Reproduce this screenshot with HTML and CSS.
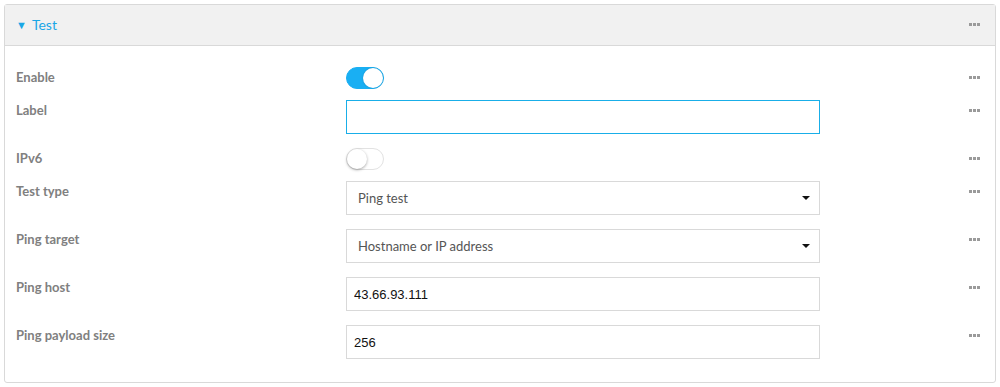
FILE: index.html
```html
<!DOCTYPE html>
<html lang="en">

<head>
    <meta charset="UTF-8">
    <title>Test</title>
    <link rel="stylesheet" href="styles.css">
</head>

<body>
    <div class="panel">
        <div class="panel-header">
            <span class="title"><span class="caret">&#9660;</span>Test</span>
            <span class="more"><i></i><i></i><i></i></span>
        </div>
        <div class="panel-body">
            <div class="row row-toggle">
                <label class="field-label">Enable</label>
                <div class="control"><span class="toggle on"><span class="knob"></span></span></div>
                <span class="more"><i></i><i></i><i></i></span>
            </div>
            <div class="row">
                <label class="field-label">Label</label>
                <div class="control"><input class="text-input focused" type="text" value=""></div>
                <span class="more"><i></i><i></i><i></i></span>
            </div>
            <div class="row row-toggle">
                <label class="field-label">IPv6</label>
                <div class="control"><span class="toggle"><span class="knob"></span></span></div>
                <span class="more"><i></i><i></i><i></i></span>
            </div>
            <div class="row">
                <label class="field-label">Test type</label>
                <div class="control">
                    <div class="select"><span>Ping test</span><span class="arrow"></span></div>
                </div>
                <span class="more"><i></i><i></i><i></i></span>
            </div>
            <div class="row">
                <label class="field-label">Ping target</label>
                <div class="control">
                    <div class="select"><span>Hostname or IP address</span><span class="arrow"></span></div>
                </div>
                <span class="more"><i></i><i></i><i></i></span>
            </div>
            <div class="row">
                <label class="field-label">Ping host</label>
                <div class="control"><input class="text-input" type="text" value="43.66.93.111"></div>
                <span class="more"><i></i><i></i><i></i></span>
            </div>
            <div class="row">
                <label class="field-label">Ping payload size</label>
                <div class="control"><input class="text-input" type="text" value="256"></div>
                <span class="more"><i></i><i></i><i></i></span>
            </div>
        </div>
    </div>
</body>

</html>
```

FILE: styles.css
```css
body {
    font-family: Lato, "Open Sans", sans-serif;
    margin: 4px;
    background: #fff;
}

.panel {
    border: 1px solid #d9d9d9;
    border-radius: 3px;
}

.panel-header {
    display: flex;
    align-items: center;
    box-sizing: border-box;
    height: 41px;
    background-color: #f1f1f1;
    border-bottom: 1px solid #d9d9d9;
    padding: 0 15px 2px 11px;
}

.title {
    color: #1aa7e6;
    font-size: 14px;
}

.caret {
    font-size: 11px;
    margin-right: 5px;
    position: relative;
    top: -1px;
}

.more {
    margin-left: auto;
    display: flex;
    gap: 1px;
}

.more i {
    width: 3px;
    height: 3px;
    background-color: #9a9a9a;
}

.panel-body {
    padding: 21px 15px 9px 11px;
}

.row {
    display: flex;
    align-items: flex-start;
    margin-bottom: 14px;
}

.row-toggle {
    margin-bottom: 11px;
}

.row .more {
    margin-top: 9px;
}

.field-label {
    width: 330px;
    line-height: 20px;
    font-size: 13px;
    font-weight: bold;
    color: #808080;
}

.control {
    width: 474px;
}

.toggle {
    display: block;
    position: relative;
    width: 36px;
    height: 20px;
    border: 1px solid #e2e2e2;
    border-radius: 11px;
    background-color: #fff;
}

.toggle.on {
    background-color: #19aff3;
    border-color: #19aff3;
}

.knob {
    position: absolute;
    top: 0;
    left: 0;
    width: 20px;
    height: 20px;
    border-radius: 50%;
    background-color: #fff;
    box-shadow: 0 1px 3px rgba(0, 0, 0, 0.35);
}

.toggle.on .knob {
    left: 16px;
    box-shadow: 0 0 2px rgba(0, 0, 0, 0.2);
}

.text-input {
    display: block;
    box-sizing: border-box;
    width: 474px;
    height: 34px;
    border: 1px solid #d9d9d9;
    padding: 0 7px;
    font-family: "Liberation Sans", Arial, sans-serif;
    font-size: 13px;
    color: #111;
    outline: none;
}

.text-input.focused {
    border-color: #19aee8;
}

.select {
    display: flex;
    align-items: center;
    box-sizing: border-box;
    height: 34px;
    border: 1px solid #d9d9d9;
    padding: 0 9px 0 11px;
    font-size: 13px;
    color: #555;
}

.arrow {
    margin-left: auto;
    width: 0;
    height: 0;
    border-left: 4px solid transparent;
    border-right: 4px solid transparent;
    border-top: 4px solid #111;
}
```
